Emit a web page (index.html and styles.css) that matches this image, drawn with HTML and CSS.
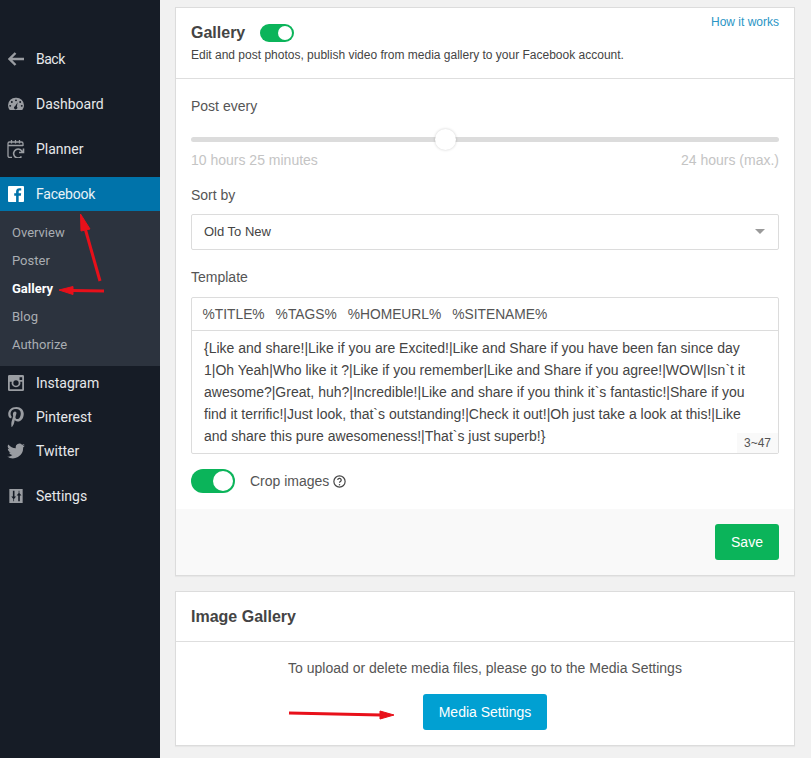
FILE: index.html
```html
<!DOCTYPE html>
<html lang="en">
<head>
<meta charset="utf-8">
<title>Gallery</title>
<link rel="stylesheet" href="styles.css">
</head>
<body>
<div class="app">
  <nav class="sidebar">
    <a class="nav-item back">
      <svg class="ico" viewBox="0 0 16 14"><path d="M7.500 1 1.500 7l6 6M2 7h14" fill="none" stroke="currentColor" stroke-width="2.400"/></svg>
      <span>Back</span>
    </a>
    <a class="nav-item dash">
      <svg class="ico" viewBox="0 0 18 18"><path fill-rule="evenodd" d="M9 2a8.500 8.500 0 0 1 9 8.500c0 2-.7 3.800-1.900 5.200H1.900A8.500 8.500 0 0 1 0 10.500 8.500 8.500 0 0 1 9 2ZM9 3.800a1.100 1.100 0 1 0 0 2.200 1.100 1.100 0 0 0 0-2.200ZM4.300 5.700a1.100 1.100 0 1 0 0 2.200 1.100 1.100 0 0 0 0-2.200ZM13.700 5.700a1.100 1.100 0 1 0 0 2.200 1.100 1.100 0 0 0 0-2.200ZM2.500 10a1.100 1.100 0 1 0 0 2.200 1.100 1.100 0 0 0 0-2.200ZM15.500 10a1.100 1.100 0 1 0 0 2.200 1.100 1.100 0 0 0 0-2.200ZM10.800 7 8 11.500a1.800 1.800 0 1 0 2 .5Z" fill="currentColor"/></svg>
      <span>Dashboard</span>
    </a>
    <a class="nav-item plan">
      <svg class="ico planner" viewBox="0 0 18 18" fill="none" stroke="currentColor" stroke-width="1.300"><path d="M5 17.500H2.500A1.500 1.500 0 0 1 1 16V3.500A1.500 1.500 0 0 1 2.500 2h12A1.500 1.500 0 0 1 16 3.500V6M1 5.500h15M4.500 0v3.500M8.500 0v3.500M12.500 0v3.500"/><path d="M15.500 12.500a4.500 4.500 0 1 0-1 4M12 12.500h4.500V8.500" stroke-width="1.600"/></svg>
      <span>Planner</span>
    </a>
    <div class="group">
      <a class="nav-item fb">
        <svg class="ico" viewBox="0 0 18 18"><path fill="#fff" d="M1 0h16a1 1 0 0 1 1 1v16a1 1 0 0 1-1 1h-5v-7h2.400l.4-2.800H12V6.500c0-.8.300-1.300 1.400-1.300h1.500V2.700c-.3 0-1.100-.1-2.100-.1-2.200 0-3.700 1.300-3.700 3.700v1.900H7V11h2.100v7H1a1 1 0 0 1-1-1V1a1 1 0 0 1 1-1Z"/></svg>
        <span>Facebook</span>
      </a>
      <ul class="submenu">
        <li>Overview</li>
        <li>Poster</li>
        <li class="current">Gallery</li>
        <li>Blog</li>
        <li>Authorize</li>
      </ul>
    </div>
    <a class="nav-item">
      <svg class="ico" viewBox="0 0 18 18"><path fill-rule="evenodd" fill="currentColor" d="M1.500 0h15A1.500 1.500 0 0 1 18 1.500v15a1.500 1.500 0 0 1-1.500 1.500h-15A1.500 1.500 0 0 1 0 16.500v-15A1.500 1.500 0 0 1 1.500 0ZM13 2.500v3h3v-3ZM2 7.500V16h14V7.500h-2.200a5 5 0 1 1-9.600 0ZM9 6a3 3 0 1 0 0 6 3 3 0 0 0 0-6Z"/></svg>
      <span>Instagram</span>
    </a>
    <a class="nav-item">
      <svg class="ico pin" viewBox="2 0 14 18"><path fill="currentColor" d="M9.500 0C4.500 0 2 3.200 2 6.200c0 1.800.7 3.400 2.200 4 .3.100.5 0 .6-.3l.2-1c.1-.3 0-.4-.2-.7-.4-.5-.7-1.100-.7-2 0-2.600 2-4.400 5-4.400 2.700 0 4.200 1.600 4.200 3.800 0 2.900-1.300 5.300-3.200 5.300-1 0-1.800-.9-1.600-1.900.3-1.300.9-2.600.9-3.500 0-.8-.4-1.500-1.300-1.500-1 0-1.900 1.100-1.900 2.500 0 .9.300 1.500.3 1.500L5 13.200c-.4 1.700-.1 3.700 0 4.800h.3c.4-.5 1.500-2 1.900-3.400l.7-2.800c.4.700 1.400 1.300 2.500 1.300 3.300 0 5.600-3 5.600-7C16 2.900 13.400 0 9.500 0Z"/></svg>
      <span>Pinterest</span>
    </a>
    <a class="nav-item">
      <svg class="ico wide" viewBox="0 0 20 18"><path fill="currentColor" d="M20 2.700c-.7.300-1.500.6-2.400.7.900-.5 1.500-1.300 1.800-2.300-.8.500-1.700.8-2.600 1A4.100 4.100 0 0 0 9.800 5.900 11.600 11.600 0 0 1 1.400 1.600a4.100 4.100 0 0 0 1.300 5.500c-.7 0-1.300-.2-1.900-.5 0 2 1.400 3.700 3.300 4.100-.6.200-1.200.2-1.900.1.500 1.600 2 2.800 3.800 2.800A8.200 8.200 0 0 1 0 15.300 11.600 11.600 0 0 0 18 5c.8-.6 1.500-1.400 2-2.300Z"/></svg>
      <span>Twitter</span>
    </a>
    <a class="nav-item settings">
      <svg class="ico" viewBox="0 0 18 18"><path fill-rule="evenodd" fill="currentColor" d="M1.500 1h15v16h-15ZM5.500 3v6.500H3.700L6 12.500V15h.8v-2.500l2.300-3H7.300V3ZM11.500 15V8.500H9.700L12 5.500V3h.8v2.500l2.300 3h-1.800V15Z"/></svg>
      <span>Settings</span>
    </a>
  </nav>

  <main class="content">
    <section class="card">
      <header class="card-head gallery-head">
        <div class="title-row">
          <h2 class="title">Gallery</h2>
          <span class="switch small"></span>
        </div>
        <p class="subtitle">Edit and post photos, publish video from media gallery to your Facebook account.</p>
        <a class="how">How it works</a>
      </header>
      <div class="card-body">
        <div class="field-label first-label">Post every</div>
        <div class="slider"><span class="thumb"></span></div>
        <div class="range-labels"><span>10 hours 25 minutes</span><span>24 hours (max.)</span></div>
        <div class="field-label sort-label">Sort by</div>
        <div class="select"><span>Old To New</span><i class="caret"></i></div>
        <div class="field-label tpl-label">Template</div>
        <div class="template">
          <div class="tags"><span>%TITLE%</span><span>%TAGS%</span><span>%HOMEURL%</span><span>%SITENAME%</span></div>
          <div class="tpl-text">{Like and share!|Like if you are Excited!|Like and Share if you have been fan since day 1|Oh Yeah|Who like it ?|Like if you remember|Like and Share if you agree!|WOW|Isn`t it awesome?|Great, huh?|Incredible!|Like and share if you think it`s fantastic!|Share if you find it terrific!|Just look, that`s outstanding!|Check it out!|Oh just take a look at this!|Like and share this pure awesomeness!|That`s just superb!}<span class="count">3~47</span></div>
        </div>
        <div class="crop-row">
          <span class="switch"></span>
          <span class="crop-label">Crop images</span>
          <svg class="help" viewBox="0 0 12 12"><circle cx="6" cy="6" r="5.200" fill="none" stroke="#444" stroke-width="1.100"/><path d="M4.400 4.700A1.600 1.600 0 1 1 6.700 6.100c-.5.300-.7.500-.7 1" fill="none" stroke="#444" stroke-width="1.100"/><circle cx="6" cy="8.900" r=".7" fill="#444"/></svg>
        </div>
      </div>
      <footer class="card-foot"><button class="btn save">Save</button></footer>
    </section>

    <section class="card media">
      <header class="card-head media-head"><h2 class="title">Image Gallery</h2></header>
      <div class="media-body">
        <p class="media-text">To upload or delete media files, please go to the Media Settings</p>
        <button class="btn blue">Media Settings</button>
      </div>
    </section>
  </main>

  <svg class="annotations" viewBox="0 0 811 758">
    <g fill="#e8101a" stroke="#e8101a" stroke-linejoin="round">
      <path d="M100 281 85 228" stroke-width="3"/>
      <path d="M80.500 214 90 229 81 231Z" stroke-width="1"/>
      <path d="M104 291 72 290.500" stroke-width="3"/>
      <path d="M59 290 73 286.500 73 294.500Z" stroke-width="1"/>
      <path d="M289 713 381 715" stroke-width="3"/>
      <path d="M394 715 380 711 380 719Z" stroke-width="1"/>
    </g>
  </svg>
</div>
</body>
</html>
```
FILE: styles.css
```css
* { box-sizing: border-box; }
html, body { margin: 0; height: 100%; overflow: hidden; }
body { background: #f1f1f1; font-family: "Liberation Sans", Arial, sans-serif; color: #444; }
.app { position: relative; display: flex; width: 811px; height: 758px; overflow: hidden; }

.sidebar { width: 160px; flex: none; background: #161c26; padding-top: 42px; font-family: Roboto, sans-serif; }
.nav-item { display: flex; align-items: center; height: 34px; padding-left: 8px; color: #e6e8ea; font-size: 14px; }
.nav-item span { margin-left: 12px; }
.ico { width: 16px; height: 16px; flex: none; color: #9a9da2; }
.ico.wide { width: 18px; margin-left: -1px; margin-right: -1px; }
.ico.planner { width: 18px; height: 18px; margin-left: -1px; margin-right: -1px; }
.ico.pin { height: 20px; }
.back .ico { height: 14px; }
.back span { letter-spacing: -.5px; }
.dash, .plan { margin-top: 11px; }
.group { margin-top: 11px; }
.fb { background: #0073aa; color: #e8f2f7; }
.fb span { letter-spacing: -.2px; }
.submenu { list-style: none; margin: 0; padding: 8px 0 7px; background: #2c333e; color: #a9adb2; font-family: Roboto, sans-serif; font-size: 13px; }
.submenu li { height: 28px; line-height: 28px; padding-left: 12px; }
.submenu .current { color: #fff; font-weight: 700; }
.settings { margin-top: 11px; }

.content { width: 620px; margin-left: 15px; padding-top: 7px; }
.card { background: #fff; border: 1px solid #dcdcdc; box-shadow: 0 1px 1px rgba(0,0,0,.04); }
.card-head { position: relative; border-bottom: 1px solid #dedede; }
.gallery-head { height: 71px; padding: 16px 15px 0; }
.title-row { display: flex; align-items: center; height: 18px; }
.title { margin: 0; font-size: 16px; font-weight: 700; color: #444; line-height: 18px; }
.subtitle { margin: 6px 0 0; font-size: 12px; line-height: 15px; color: #444; }
.how { position: absolute; top: 7px; right: 15px; font-size: 12px; line-height: 15px; color: #2a95c5; }

.switch { position: relative; display: block; width: 44px; height: 24px; border-radius: 12px; background: #0bb45a; flex: none; }
.switch::after { content: ""; position: absolute; top: 2px; right: 2px; width: 20px; height: 20px; border-radius: 50%; background: #fff; }
.switch.small { width: 34px; height: 18px; border-radius: 9px; margin-left: 15px; }
.switch.small::after { top: 2px; right: 2px; width: 14px; height: 14px; }

.card-body { padding: 0 15px; height: 430px; }
.field-label { font-size: 14px; line-height: 16px; color: #555; }
.first-label { padding-top: 19px; height: 35px; }
.slider { position: relative; height: 5px; margin-top: 23px; border-radius: 3px; background: #dcdcdc; }
.thumb { position: absolute; left: 244px; top: -8px; width: 21px; height: 21px; border-radius: 50%; background: #fff; box-shadow: 0 0 3px rgba(0,0,0,.2); }
.range-labels { display: flex; justify-content: space-between; margin-top: 10px; font-size: 14px; line-height: 16px; color: #c4c4c4; }
.sort-label { margin-top: 19px; }
.select { display: flex; align-items: center; justify-content: space-between; height: 36px; margin-top: 11px; padding: 0 13px 2px 12px; border: 1px solid #dcdcdc; border-radius: 2px; font-size: 13px; color: #444; }
.caret { width: 0; height: 0; border-left: 5px solid transparent; border-right: 5px solid transparent; border-top: 5px solid #9a9a9a; }
.tpl-label { margin-top: 19px; }
.template { margin-top: 12px; border: 1px solid #dcdcdc; border-radius: 2px; }
.tags { display: flex; gap: 11px; height: 33px; align-items: center; padding: 0 10.500px; font-size: 13.800px; color: #555; border-bottom: 1px solid #dcdcdc; }
.tpl-text { position: relative; height: 122px; padding: 6px 12px 0; font-size: 14px; line-height: 22px; color: #444; }
.count { position: absolute; right: 0; bottom: 0; padding: 3px 7px 2px 7px; font-size: 12px; line-height: 15px; color: #555; background: #f9f9f9; }
.crop-row { display: flex; align-items: center; margin-top: 15px; height: 24px; }
.crop-label { margin-left: 15px; font-size: 14px; color: #555; }
.help { width: 13px; height: 13px; margin-left: 4px; }

.card-foot { display: flex; justify-content: flex-end; align-items: center; height: 66px; padding: 0 15px; background: #f9f9f9; }
.btn { border: 0; border-radius: 3px; color: #fff; font-family: "Liberation Sans", Arial, sans-serif; font-size: 14px; height: 36px; }
.save { width: 64px; background: #0bb45a; }
.blue { width: 124px; background: #01a0d2; }

.media { margin-top: 15px; height: 155px; }
.media-head { height: 50px; padding: 16px 15px 0; }
.media-body { display: flex; flex-direction: column; align-items: center; padding-top: 18px; }
.media-text { margin: 0; font-size: 14px; line-height: 16px; color: #555; }
.media-body .btn { margin-top: 18px; }

.annotations { position: absolute; left: 0; top: 0; width: 811px; height: 758px; pointer-events: none; }
```
